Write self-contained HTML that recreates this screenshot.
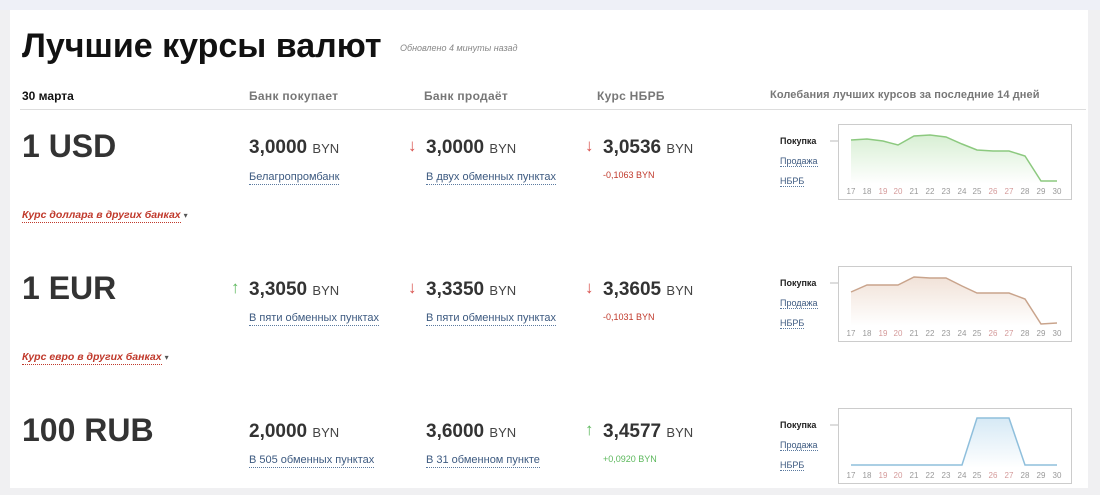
<!DOCTYPE html>
<html><head><meta charset="utf-8"><style>
body{margin:0;width:1100px;height:495px;overflow:hidden;background:#f0f0f2;font-family:"Liberation Sans","DejaVu Sans",sans-serif;position:relative}
.top{position:absolute;left:0;top:0;width:1100px;height:10px;background:#eef0f7}
.panel{position:absolute;left:10px;top:10px;width:1078px;height:478px;background:#fff}
.a{position:absolute;white-space:nowrap}
.h1{font-size:34px;font-weight:bold;color:#111;left:22px;top:27px;letter-spacing:0}
.upd{font-size:9px;font-style:italic;color:#888;left:400px;top:43px}
.hd{font-size:12px;font-weight:bold;color:#777;top:89px;letter-spacing:0.3px}
.line{position:absolute;left:20px;width:1066px;top:109px;height:1px;background:#ddd}
.cur{font-size:32px;font-weight:bold;color:#333;left:22px}
.val{font-size:19px;font-weight:bold;color:#333}
.val span{font-size:13px;font-weight:normal;color:#444}
.lnk{font-size:11px;color:#3d5a80;border-bottom:1px dotted #5b7aa0;line-height:13px}
.chg{font-size:9px}
.arr{font-size:17px}
.oth{font-size:10.5px;left:22px}
.oth b{font-style:italic;color:#c0392b;border-bottom:1px dotted #c0392b;line-height:13px;display:inline-block}
.oth i{font-size:8px;color:#555;font-style:normal;margin-left:3px}
.lb{font-size:9px;left:780px}
.lb.b{font-weight:bold;color:#222}
.lb.l{color:#3d5a80;border-bottom:1px dotted #5b7aa0}
svg{position:absolute;left:830px}
</style></head><body>
<div class="top"></div><div class="panel"></div>
<div class="a h1">Лучшие курсы валют</div>
<div class="a upd">Обновлено 4 минуты назад</div>
<div class="a hd" style="left:22px;color:#111;letter-spacing:0">30 марта</div>
<div class="a hd" style="left:249px">Банк покупает</div>
<div class="a hd" style="left:424px">Банк продаёт</div>
<div class="a hd" style="left:597px">Курс НБРБ</div>
<div class="a hd" style="left:770px;font-size:11px;letter-spacing:0.1px">Колебания лучших курсов за последние 14 дней</div>
<div class="line"></div>

<div class="a cur" style="top:128px">1 USD</div>
<div class="a val" style="left:249px;top:137px">3,0000 <span>BYN</span></div>
<div class="a lnk" style="left:249px;top:171px">Белагропромбанк</div>
<div class="a arr" style="left:408px;top:136px;color:#d9534f">↓</div>
<div class="a val" style="left:426px;top:137px">3,0000 <span>BYN</span></div>
<div class="a lnk" style="left:426px;top:171px">В двух обменных пунктах</div>
<div class="a arr" style="left:585px;top:136px;color:#d9534f">↓</div>
<div class="a val" style="left:603px;top:137px">3,0536 <span>BYN</span></div>
<div class="a chg" style="left:603px;top:170px;color:#c0392b">-0,1063 BYN</div>
<div class="a oth" style="top:209px"><b>Курс доллара в других банках</b><i>▾</i></div>

<div class="a cur" style="top:270px">1 EUR</div>
<div class="a arr" style="left:231px;top:278px;color:#5cb85c">↑</div>
<div class="a val" style="left:249px;top:279px">3,3050 <span>BYN</span></div>
<div class="a lnk" style="left:249px;top:312px">В пяти обменных пунктах</div>
<div class="a arr" style="left:408px;top:278px;color:#d9534f">↓</div>
<div class="a val" style="left:426px;top:279px">3,3350 <span>BYN</span></div>
<div class="a lnk" style="left:426px;top:312px">В пяти обменных пунктах</div>
<div class="a arr" style="left:585px;top:278px;color:#d9534f">↓</div>
<div class="a val" style="left:603px;top:279px">3,3605 <span>BYN</span></div>
<div class="a chg" style="left:603px;top:312px;color:#c0392b">-0,1031 BYN</div>
<div class="a oth" style="top:351px"><b>Курс евро в других банках</b><i>▾</i></div>

<div class="a cur" style="top:412px">100 RUB</div>
<div class="a val" style="left:249px;top:421px">2,0000 <span>BYN</span></div>
<div class="a lnk" style="left:249px;top:454px">В 505 обменных пунктах</div>
<div class="a val" style="left:426px;top:421px">3,6000 <span>BYN</span></div>
<div class="a lnk" style="left:426px;top:454px">В 31 обменном пункте</div>
<div class="a arr" style="left:585px;top:420px;color:#5cb85c">↑</div>
<div class="a val" style="left:603px;top:421px">3,4577 <span>BYN</span></div>
<div class="a chg" style="left:603px;top:454px;color:#5cb85c">+0,0920 BYN</div>

<div class="a lb b" style="top:136px">Покупка</div><div class="a lb l" style="top:156px">Продажа</div><div class="a lb l" style="top:176px">НБРБ</div>
<div class="a lb b" style="top:278px">Покупка</div><div class="a lb l" style="top:298px">Продажа</div><div class="a lb l" style="top:318px">НБРБ</div>
<div class="a lb b" style="top:420px">Покупка</div><div class="a lb l" style="top:440px">Продажа</div><div class="a lb l" style="top:460px">НБРБ</div>

<svg style="top:124px" width="245" height="78" font-family="Liberation Sans,sans-serif" font-size="8">
<defs><linearGradient id="g1" x1="0" y1="0" x2="0" y2="1"><stop offset="0" stop-color="#d8efd4"/><stop offset="1" stop-color="#fff"/></linearGradient></defs>
<line x1="0" y1="17" x2="8" y2="17" stroke="#bbb"/>
<rect x="8.5" y="0.5" width="233" height="75" fill="#fff" stroke="#ccc"/>
<polygon points="21,16 37,15 53,17 68,21 84,12 100,11 116,13 132,20 147,26 163,27 179,27 195,32 211,57 227,57 227,60 21,60" fill="url(#g1)"/>
<polyline points="21,16 37,15 53,17 68,21 84,12 100,11 116,13 132,20 147,26 163,27 179,27 195,32 211,57 227,57" fill="none" stroke="#8cc97f" stroke-width="1.5"/>
<g fill="#999" text-anchor="middle"><text x="21" y="70">17</text><text x="37" y="70">18</text><text x="53" y="70" fill="#d49a9a">19</text><text x="68" y="70" fill="#d49a9a">20</text><text x="84" y="70">21</text><text x="100" y="70">22</text><text x="116" y="70">23</text><text x="132" y="70">24</text><text x="147" y="70">25</text><text x="163" y="70" fill="#d49a9a">26</text><text x="179" y="70" fill="#d49a9a">27</text><text x="195" y="70">28</text><text x="211" y="70">29</text><text x="227" y="70">30</text></g>
</svg>

<svg style="top:266px" width="245" height="78" font-family="Liberation Sans,sans-serif" font-size="8">
<defs><linearGradient id="g2" x1="0" y1="0" x2="0" y2="1"><stop offset="0" stop-color="#f1e2d8"/><stop offset="1" stop-color="#fff"/></linearGradient></defs>
<line x1="0" y1="17" x2="8" y2="17" stroke="#bbb"/>
<rect x="8.5" y="0.5" width="233" height="75" fill="#fff" stroke="#ccc"/>
<polygon points="21,26 37,19 53,19 68,19 84,11 100,12 116,12 132,20 147,27 163,27 179,27 195,33 211,58 227,57 227,60 21,60" fill="url(#g2)"/>
<polyline points="21,26 37,19 53,19 68,19 84,11 100,12 116,12 132,20 147,27 163,27 179,27 195,33 211,58 227,57" fill="none" stroke="#c9a48c" stroke-width="1.5"/>
<g fill="#999" text-anchor="middle"><text x="21" y="70">17</text><text x="37" y="70">18</text><text x="53" y="70" fill="#d49a9a">19</text><text x="68" y="70" fill="#d49a9a">20</text><text x="84" y="70">21</text><text x="100" y="70">22</text><text x="116" y="70">23</text><text x="132" y="70">24</text><text x="147" y="70">25</text><text x="163" y="70" fill="#d49a9a">26</text><text x="179" y="70" fill="#d49a9a">27</text><text x="195" y="70">28</text><text x="211" y="70">29</text><text x="227" y="70">30</text></g>
</svg>

<svg style="top:408px" width="245" height="78" font-family="Liberation Sans,sans-serif" font-size="8">
<defs><linearGradient id="g3" x1="0" y1="0" x2="0" y2="1"><stop offset="0" stop-color="#d6e9f5"/><stop offset="1" stop-color="#fff"/></linearGradient></defs>
<line x1="0" y1="17" x2="8" y2="17" stroke="#bbb"/>
<rect x="8.5" y="0.5" width="233" height="75" fill="#fff" stroke="#ccc"/>
<polygon points="21,57 132,57 147,10 179,10 195,57 227,57 227,60 21,60" fill="url(#g3)"/>
<polyline points="21,57 132,57 147,10 179,10 195,57 227,57" fill="none" stroke="#8fbfdc" stroke-width="1.5"/>
<g fill="#999" text-anchor="middle"><text x="21" y="70">17</text><text x="37" y="70">18</text><text x="53" y="70" fill="#d49a9a">19</text><text x="68" y="70" fill="#d49a9a">20</text><text x="84" y="70">21</text><text x="100" y="70">22</text><text x="116" y="70">23</text><text x="132" y="70">24</text><text x="147" y="70">25</text><text x="163" y="70" fill="#d49a9a">26</text><text x="179" y="70" fill="#d49a9a">27</text><text x="195" y="70">28</text><text x="211" y="70">29</text><text x="227" y="70">30</text></g>
</svg>
</body></html>
